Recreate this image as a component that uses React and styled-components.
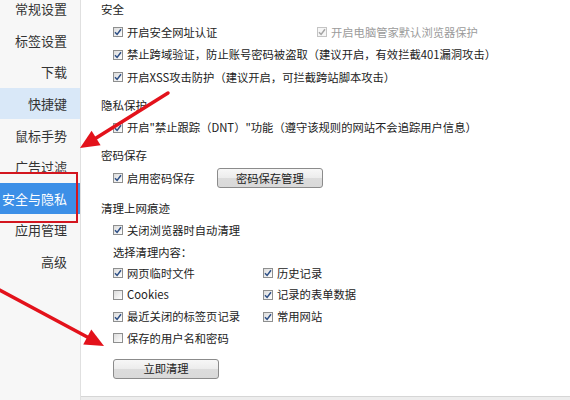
import React from 'react';
import styled, { createGlobalStyle } from 'styled-components';

const Global = createGlobalStyle`
  html, body { margin: 0; padding: 0; background: #fff; }
  body {
    font-family: "Noto Sans CJK SC", "Noto Sans", sans-serif;
    width: 570px; height: 400px; overflow: hidden;
  }
  * { box-sizing: border-box; }
`;

const Page = styled.div`
  position: relative;
  display: flex;
  width: 570px;
  height: 400px;
  overflow: hidden;
  background: #ededed;
`;

const Sidebar = styled.nav`
  width: 81px;
  flex: none;
  background: #f7f7f7;
  border-right: 1px solid #e0e0e0;
  overflow: hidden;
`;

const NavList = styled.div`
  display: flex;
  flex-direction: column;
  margin-top: -7px;
`;

const NavItem = styled.div`
  position: relative;
  height: 31.6px;
  display: flex;
  align-items: center;
  justify-content: flex-end;
  padding-right: 13px;
  font-size: 13px;
  line-height: 1;
  color: ${p => (p.$state === 'active' ? '#fff' : '#333')};
  background: ${p =>
    p.$state === 'active' ? '#3c8fe7' : p.$state === 'hover' ? '#d9e8f8' : 'transparent'};
`;

const RedBox = styled.div`
  position: absolute;
  left: -4px;
  right: 2px;
  top: -11px;
  bottom: -9px;
  border: 2px solid #d3161f;
  pointer-events: none;
`;

const Main = styled.main`
  flex: 1;
  height: 397px;
  background: #fff;
  border-bottom: 1px solid #d6d6d6;
  padding-left: 20px;
  overflow: hidden;
`;

const Content = styled.div`
  margin-top: -2px;
  display: flex;
  flex-direction: column;
`;

const Section = styled.section`
  display: flex;
  flex-direction: column;
  margin-top: ${p => p.$gap || 0}px;
`;

const Heading = styled.div`
  height: 22px;
  line-height: 22px;
  font-size: 11.5px;
  color: #222;
  margin-bottom: 1px;
`;

const Row = styled.div`
  height: ${p => p.$h || 22.5}px;
  display: flex;
  align-items: center;
  padding-left: 12px;
  font-size: 11.3px;
  color: #222;
  white-space: nowrap;
`;

const Label = styled.span`
  font-size: 11.3px;
  color: #222;
`;

const Option = styled.label`
  display: flex;
  align-items: center;
  gap: 4px;
  width: ${p => (p.$w ? `${p.$w}px` : 'auto')};
  flex: none;
  font-size: 11.3px;
  line-height: 1;
  color: ${p => (p.$disabled ? '#9b9b9b' : '#222')};
  white-space: nowrap;
`;

const Box = styled.span`
  width: 10px;
  height: 10px;
  flex: none;
  display: inline-flex;
  align-items: center;
  justify-content: center;
  border: 1px solid ${p => (p.$disabled ? '#c4c4c4' : '#8e8f8f')};
  background: ${p =>
    p.$disabled ? '#f6f6f6' : 'linear-gradient(135deg, #dcdcdc 0%, #f4f4f4 70%, #fff 100%)'};
`;

const Grid = styled.div`
  display: grid;
  grid-template-columns: 150px auto;
  grid-auto-rows: 21.6px;
  padding-left: 12px;
  align-items: center;
`;

const Button = styled.button`
  height: 20px;
  width: ${p => p.$w}px;
  margin-left: ${p => p.$ml || 0}px;
  margin-top: ${p => p.$mt || 0}px;
  padding: 0;
  border: 1px solid #8b8b8b;
  border-radius: 3px;
  background: linear-gradient(#f7f7f7 0%, #ececec 50%, #dcdcdc 51%, #d9d9d9 100%);
  font-family: inherit;
  font-size: 11.3px;
  color: #222;
  line-height: 1;
  flex: none;
`;

const Overlay = styled.svg`
  position: absolute;
  left: 0;
  top: 0;
  width: 570px;
  height: 400px;
  pointer-events: none;
`;

function Checkbox({ checked, disabled }) {
  return (
    <Box $disabled={disabled}>
      {checked && (
        <svg width="8" height="8" viewBox="0 0 8 8">
          <path
            d="M1 4.2 L3.1 6.4 L7 1.2"
            fill="none"
            stroke={disabled ? '#a5a5a5' : '#2d4f86'}
            strokeWidth="1.5"
          />
        </svg>
      )}
    </Box>
  );
}

function Check({ children, checked = true, disabled, w }) {
  return (
    <Option $disabled={disabled} $w={w}>
      <Checkbox checked={checked} disabled={disabled} />
      <span>{children}</span>
    </Option>
  );
}

function arrowPoints(sx, sy, tx, ty, len = 19, half = 8.5) {
  const dx = tx - sx, dy = ty - sy;
  const L = Math.hypot(dx, dy);
  const ux = dx / L, uy = dy / L;
  const bx = tx - ux * len, by = ty - uy * len;
  const nx = -uy, ny = ux;
  return {
    head: `${tx},${ty} ${bx + nx * half},${by + ny * half} ${bx - nx * half},${by - ny * half}`,
    bx, by,
  };
}

function Arrow({ sx, sy, tx, ty }) {
  const { head, bx, by } = arrowPoints(sx, sy, tx, ty);
  return (
    <g fill="#e3121b" stroke="none">
      <line x1={sx} y1={sy} x2={bx} y2={by} stroke="#e3121b" strokeWidth="3.5" strokeLinecap="round" />
      <polygon points={head} />
    </g>
  );
}

const navItems = [
  ['常规设置'],
  ['标签设置'],
  ['下载'],
  ['快捷键', 'hover'],
  ['鼠标手势'],
  ['广告过滤'],
  ['安全与隐私', 'active'],
  ['应用管理'],
  ['高级'],
];

export default function App() {
  return (
    <>
      <Global />
      <Page>
        <Sidebar>
          <NavList>
            {navItems.map(([t, s]) => (
              <NavItem key={t} $state={s}>
                {t}
                {s === 'active' && <RedBox />}
              </NavItem>
            ))}
          </NavList>
        </Sidebar>
        <Main>
          <Content>
            <Section>
              <Heading>安全</Heading>
              <Row>
                <Check w={204}>开启安全网址认证</Check>
                <Check disabled>开启电脑管家默认浏览器保护</Check>
              </Row>
              <Row>
                <Check>禁止跨域验证，防止账号密码被盗取（建议开启，有效拦截401漏洞攻击）</Check>
              </Row>
              <Row>
                <Check>开启XSS攻击防护（建议开启，可拦截跨站脚本攻击）</Check>
              </Row>
            </Section>
            <Section $gap={5}>
              <Heading>隐私保护</Heading>
              <Row>
                <Check>开启"禁止跟踪（DNT）"功能（遵守该规则的网站不会追踪用户信息）</Check>
              </Row>
            </Section>
            <Section $gap={5}>
              <Heading>密码保存</Heading>
              <Row>
                <Check>启用密码保存</Check>
                <Button $w={106} $ml={22}>密码保存管理</Button>
              </Row>
            </Section>
            <Section $gap={7}>
              <Heading>清理上网痕迹</Heading>
              <Row $h={21.6}>
                <Check>关闭浏览器时自动清理</Check>
              </Row>
              <Row $h={21.6}>
                <Label>选择清理内容：</Label>
              </Row>
              <Grid>
                <Check>网页临时文件</Check>
                <Check>历史记录</Check>
                <Check checked={false}>Cookies</Check>
                <Check>记录的表单数据</Check>
                <Check>最近关闭的标签页记录</Check>
                <Check>常用网站</Check>
                <Check checked={false}>保存的用户名和密码</Check>
              </Grid>
              <Row $h={30}>
                <Button $w={106} $mt={10}>立即清理</Button>
              </Row>
            </Section>
          </Content>
        </Main>
        <Overlay viewBox="0 0 570 400">
          <Arrow sx={168} sy={93} tx={80} ty={148} />
          <Arrow sx={-4} sy={288} tx={104} ty={346} />
        </Overlay>
      </Page>
    </>
  );
}
